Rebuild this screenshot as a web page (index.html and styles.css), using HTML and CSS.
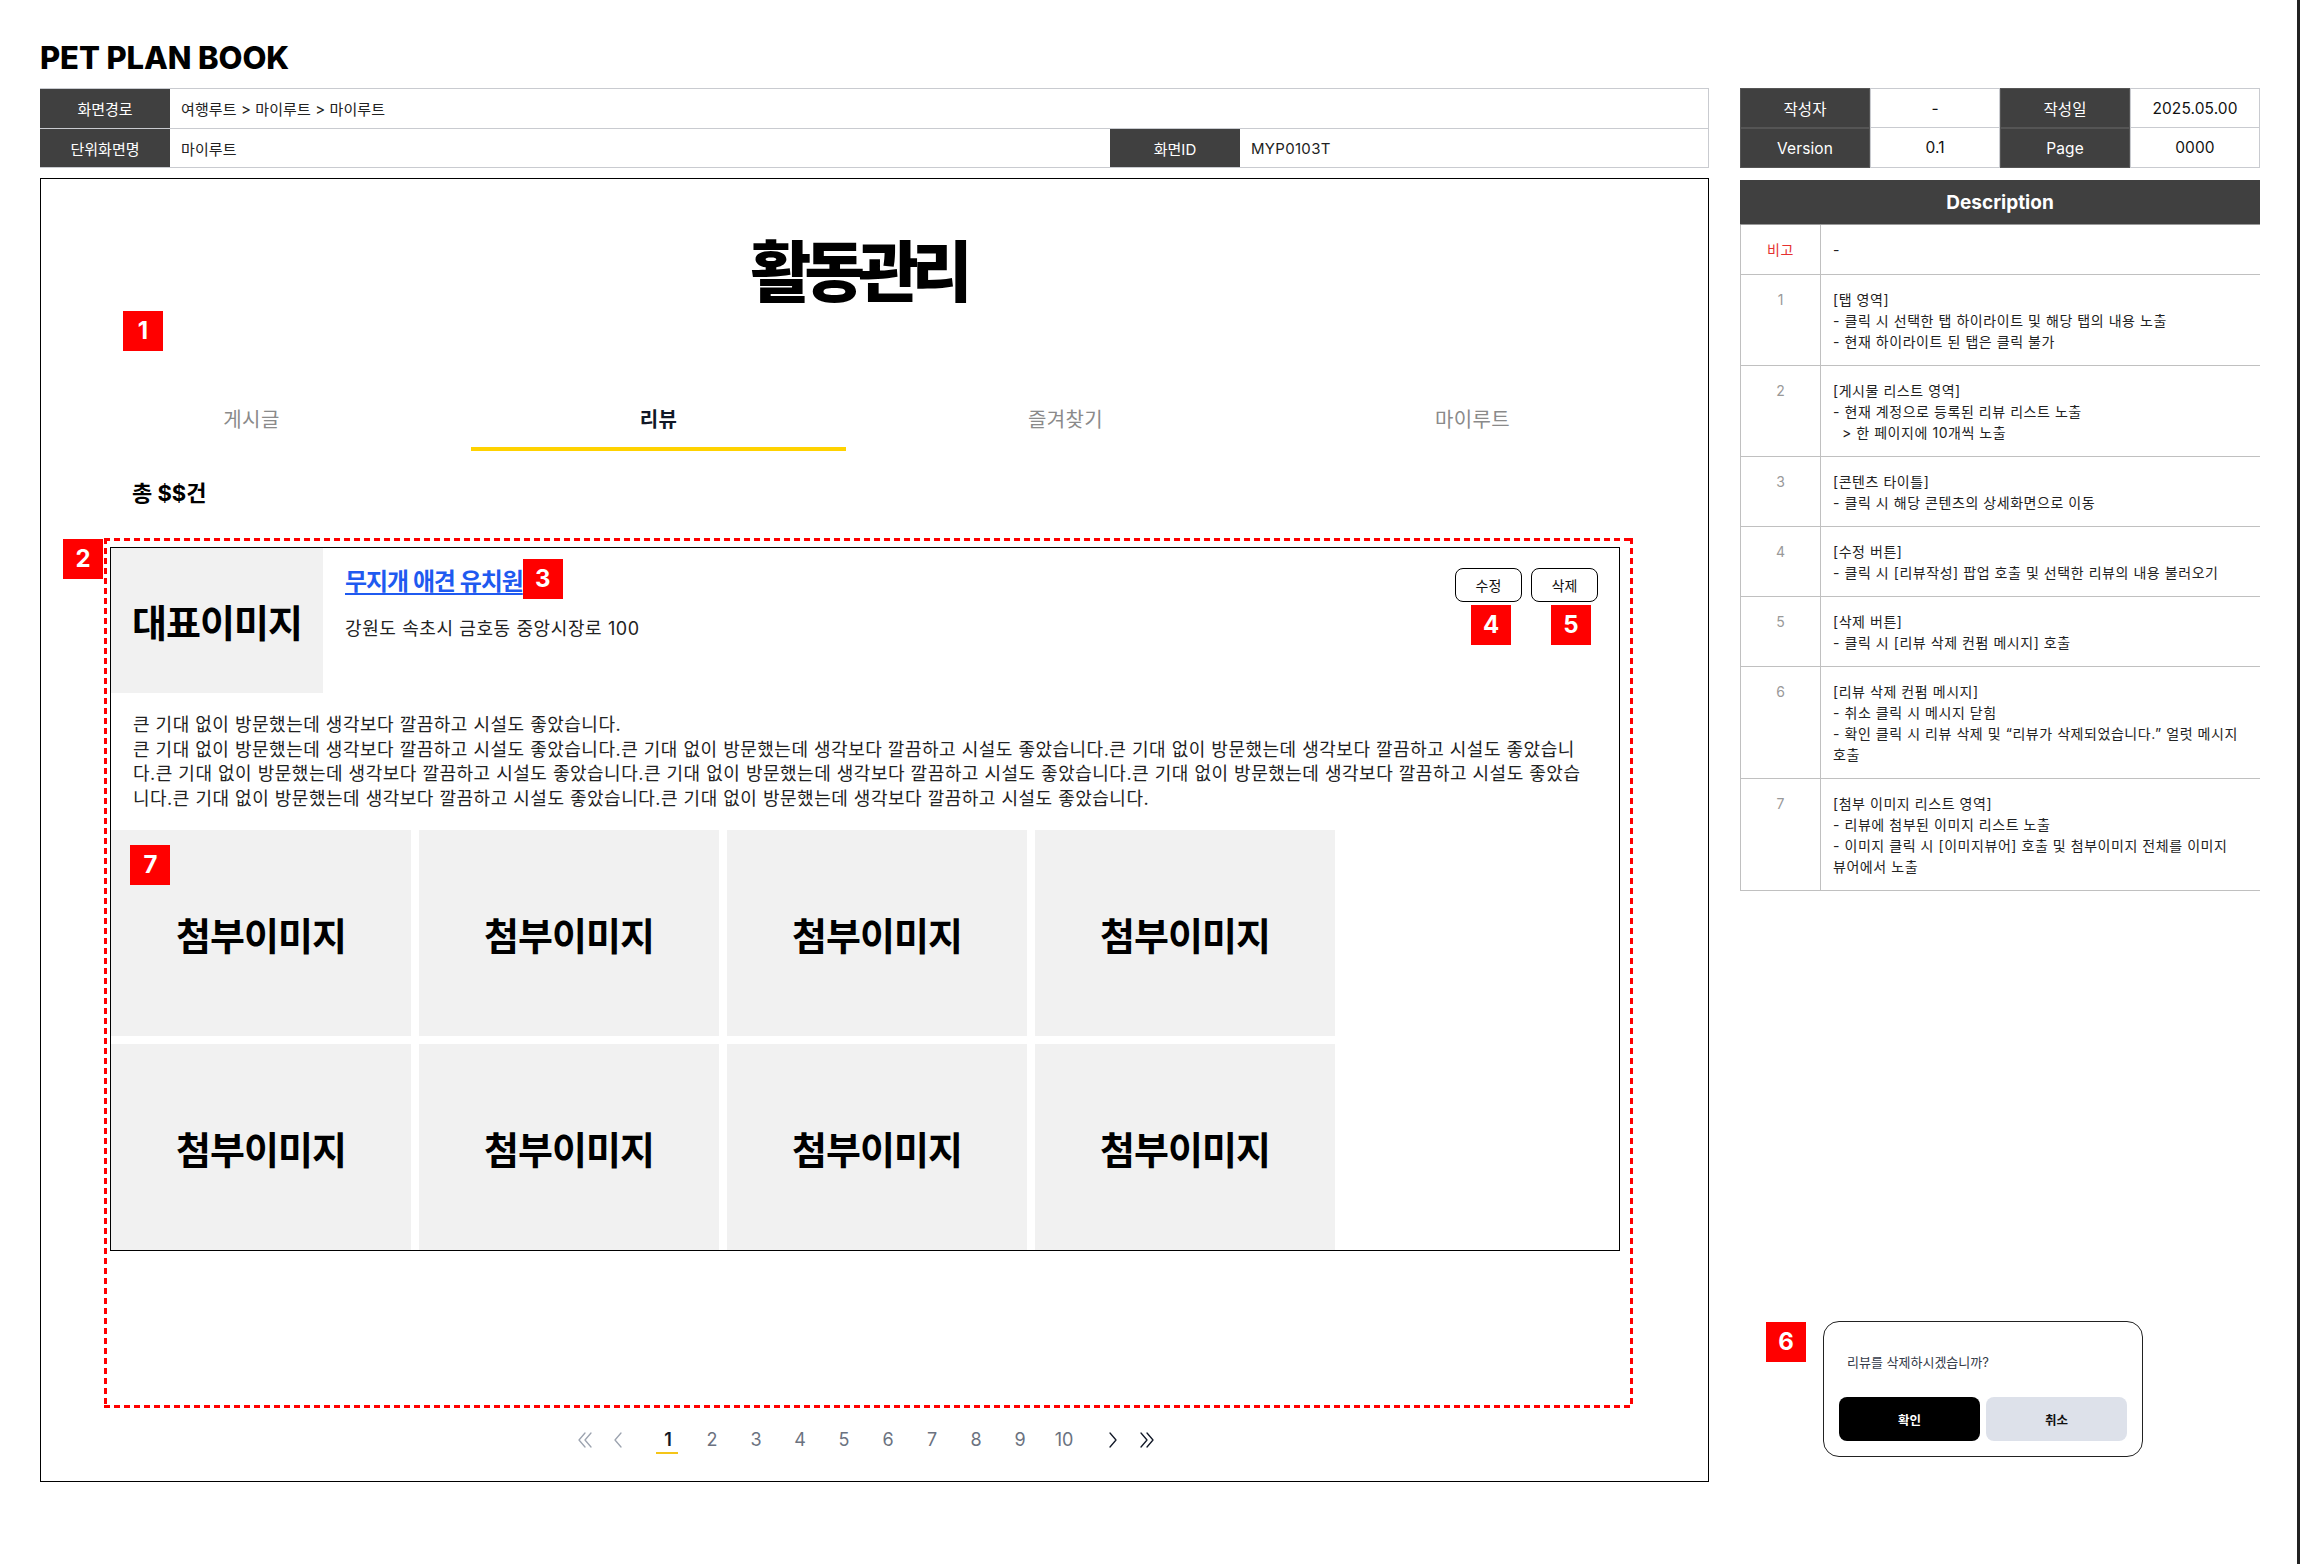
FILE: index.html
```html
<!DOCTYPE html>
<html lang="ko">
<head>
<meta charset="utf-8">
<title>PET PLAN BOOK - 활동관리</title>
<link rel="stylesheet" href="styles.css">
</head>
<body>
<div class="page">
  <div class="main-col">
    <h1 class="brand">PET PLAN BOOK</h1>
    <div class="meta">
      <div class="meta-row">
        <div class="meta-label">화면경로</div>
        <div class="meta-value">여행루트 &gt; 마이루트 &gt; 마이루트</div>
      </div>
      <div class="meta-row">
        <div class="meta-label">단위화면명</div>
        <div class="meta-value grow">마이루트</div>
        <div class="meta-label">화면ID</div>
        <div class="meta-value id">MYP0103T</div>
      </div>
    </div>

    <div class="frame">
      <h2 class="screen-title">활동관리</h2>
      <div class="badge badge-1">1</div>
      <nav class="tabs">
        <span class="tab">게시글</span>
        <span class="tab active">리뷰</span>
        <span class="tab">즐겨찾기</span>
        <span class="tab">마이루트</span>
      </nav>
      <p class="count">총 $$건</p>

      <section class="review-area">
        <span class="badge badge-2">2</span>
        <article class="card">
          <div class="card-head">
            <div class="thumb">대표이미지</div>
            <div class="info">
              <div class="title-row"><a class="place" href="#">무지개 애견 유치원</a><span class="badge">3</span></div>
              <p class="addr">강원도 속초시 금호동 중앙시장로 100</p>
            </div>
            <div class="actions">
              <div class="act"><button class="btn-sm">수정</button><span class="badge badge-4">4</span></div>
              <div class="act"><button class="btn-sm">삭제</button><span class="badge badge-5">5</span></div>
            </div>
          </div>
          <p class="review-text">큰 기대 없이 방문했는데 생각보다 깔끔하고 시설도 좋았습니다.<br>큰 기대 없이 방문했는데 생각보다 깔끔하고 시설도 좋았습니다.큰 기대 없이 방문했는데 생각보다 깔끔하고 시설도 좋았습니다.큰 기대 없이 방문했는데 생각보다 깔끔하고 시설도 좋았습니다.큰 기대 없이 방문했는데 생각보다 깔끔하고 시설도 좋았습니다.큰 기대 없이 방문했는데 생각보다 깔끔하고 시설도 좋았습니다.큰 기대 없이 방문했는데 생각보다 깔끔하고 시설도 좋았습니다.큰 기대 없이 방문했는데 생각보다 깔끔하고 시설도 좋았습니다.큰 기대 없이 방문했는데 생각보다 깔끔하고 시설도 좋았습니다.</p>
          <div class="gallery">
            <div class="shot">첨부이미지<span class="badge badge-7">7</span></div>
            <div class="shot">첨부이미지</div>
            <div class="shot">첨부이미지</div>
            <div class="shot">첨부이미지</div>
            <div class="shot">첨부이미지</div>
            <div class="shot">첨부이미지</div>
            <div class="shot">첨부이미지</div>
            <div class="shot">첨부이미지</div>
          </div>
        </article>
      </section>

      <div class="pager">
        <span class="pg-arrow first"><svg width="20" height="16" viewBox="0 0 20 16"><polyline points="9,1 3,8 9,15"/><polyline points="15,1 9,8 15,15"/></svg></span>
        <span class="pg-arrow prev"><svg width="12" height="16" viewBox="0 0 12 16"><polyline points="9,1 3,8 9,15"/></svg></span>
        <span class="pg-num on">1</span>
        <span class="pg-num">2</span>
        <span class="pg-num">3</span>
        <span class="pg-num">4</span>
        <span class="pg-num">5</span>
        <span class="pg-num">6</span>
        <span class="pg-num">7</span>
        <span class="pg-num">8</span>
        <span class="pg-num">9</span>
        <span class="pg-num">10</span>
        <span class="pg-arrow next"><svg width="12" height="16" viewBox="0 0 12 16"><polyline points="3,1 9,8 3,15"/></svg></span>
        <span class="pg-arrow last"><svg width="20" height="16" viewBox="0 0 20 16"><polyline points="5,1 11,8 5,15"/><polyline points="11,1 17,8 11,15"/></svg></span>
      </div>
    </div>
  </div>

  <aside class="side">
    <div class="info-grid">
      <div class="ik">작성자</div>
      <div class="iv">-</div>
      <div class="ik">작성일</div>
      <div class="iv">2025.05.00</div>
      <div class="ik">Version</div>
      <div class="iv r2">0.1</div>
      <div class="ik">Page</div>
      <div class="iv r2">0000</div>
    </div>

    <div class="desc-head">Description</div>
    <div class="desc-row first">
      <div class="desc-no note">비고</div>
      <div class="desc-text">-</div>
    </div>
    <div class="desc-row">
      <div class="desc-no">1</div>
      <div class="desc-text">[탭 영역]<br>- 클릭 시 선택한 탭 하이라이트 및 해당 탭의 내용 노출<br>- 현재 하이라이트 된 탭은 클릭 불가</div>
    </div>
    <div class="desc-row">
      <div class="desc-no">2</div>
      <div class="desc-text">[게시물 리스트 영역]<br>- 현재 계정으로 등록된 리뷰 리스트 노출<br>&nbsp;&nbsp;&gt; 한 페이지에 10개씩 노출</div>
    </div>
    <div class="desc-row">
      <div class="desc-no">3</div>
      <div class="desc-text">[콘텐츠 타이틀]<br>- 클릭 시 해당 콘텐츠의 상세화면으로 이동</div>
    </div>
    <div class="desc-row">
      <div class="desc-no">4</div>
      <div class="desc-text">[수정 버튼]<br>- 클릭 시 [리뷰작성] 팝업 호출 및 선택한 리뷰의 내용 불러오기</div>
    </div>
    <div class="desc-row">
      <div class="desc-no">5</div>
      <div class="desc-text">[삭제 버튼]<br>- 클릭 시 [리뷰 삭제 컨펌 메시지] 호출</div>
    </div>
    <div class="desc-row">
      <div class="desc-no">6</div>
      <div class="desc-text">[리뷰 삭제 컨펌 메시지]<br>- 취소 클릭 시 메시지 닫힘<br>- 확인 클릭 시 리뷰 삭제 및 “리뷰가 삭제되었습니다.” 얼럿 메시지<br>호출</div>
    </div>
    <div class="desc-row">
      <div class="desc-no">7</div>
      <div class="desc-text">[첨부 이미지 리스트 영역]<br>- 리뷰에 첨부된 이미지 리스트 노출<br>- 이미지 클릭 시 [이미지뷰어] 호출 및 첨부이미지 전체를 이미지<br>뷰어에서 노출</div>
    </div>

    <div class="popup-row">
      <span class="badge badge-6">6</span>
      <div class="popup">
        <p class="popup-msg">리뷰를 삭제하시겠습니까?</p>
        <div class="popup-btns">
          <button class="pbtn ok">확인</button>
          <button class="pbtn cancel">취소</button>
        </div>
      </div>
    </div>
  </aside>
</div>
<div class="edge"></div>
</body>
</html>
```

FILE: styles.css
```css
* {
  box-sizing: border-box;
  margin: 0;
  padding: 0;
}

body {
  margin: 0;
  width: 2300px;
  height: 1564px;
  overflow: hidden;
  position: relative;
  background: #fff;
  color: #111;
  font-family: Inter, "Noto Sans CJK KR", sans-serif;
}

.page {
  display: flex;
  gap: 31px;
  padding: 39px 0 0 40px;
}

.main-col {
  width: 1669px;
}

.brand {
  font-size: 31px;
  font-weight: 800;
  line-height: 38px;
  height: 38px;
  letter-spacing: -0.1px;
  color: #000;
}

/* meta table */
.meta {
  margin-top: 11px;
  border-top: 1px solid #c9cbd0;
  border-right: 1px solid #c9cbd0;
  border-bottom: 1px solid #c9cbd0;
}

.meta-row {
  display: flex;
  height: 39px;
}

.meta-row + .meta-row {
  border-top: 1px solid #c9cbd0;
}

.meta-label {
  width: 130px;
  flex: none;
  background: #404040;
  color: #fff;
  font-size: 15px;
  display: flex;
  align-items: center;
  justify-content: center;
}

.meta-value {
  display: flex;
  align-items: center;
  padding-left: 11px;
  font-size: 15px;
  letter-spacing: 0.1px;
  color: #222;
}

.meta-value.grow {
  width: 940px;
}

.meta-value.id {
  flex: 1;
  letter-spacing: 0.3px;
}

/* main frame */
.frame {
  margin-top: 10px;
  border: 1px solid #000;
  padding: 60px 44px 26px 27px;
}

.screen-title {
  font-size: 66px;
  line-height: 66px;
  font-weight: 900;
  letter-spacing: -7px;
  text-align: center;
  padding-right: 16px;
  color: #000;
}

.badge {
  width: 40px;
  height: 40px;
  flex: none;
  display: inline-flex;
  align-items: center;
  justify-content: center;
  background: #ff0000;
  color: #fff;
  font-family: Inter, sans-serif;
  font-weight: 700;
  font-size: 24px;
  line-height: 1;
}

.badge-1 {
  display: flex;
  margin: 6px 0 57px 55px;
}

.tabs {
  display: grid;
  grid-template-columns: repeat(4, 375px);
  column-gap: 32px;
  margin-left: -4px;
}

.tab {
  text-align: center;
  font-size: 20px;
  line-height: 24px;
  letter-spacing: 0.4px;
  padding-bottom: 15px;
  border-bottom: 4px solid transparent;
  color: #8a8a8a;
}

.tab.active {
  color: #111827;
  font-weight: 700;
  border-bottom-color: #ffd200;
}

.count {
  margin-top: 27px;
  padding-left: 64px;
  font-size: 22px;
  font-weight: 700;
  line-height: 30px;
  color: #000;
}

/* annotated list area */
.review-area {
  position: relative;
  margin-top: 30px;
  margin-left: 36px;
  width: 1529px;
  height: 870px;
  padding: 9px 13px 0 6px;
  background:
    repeating-linear-gradient(90deg, #f00 0 6px, transparent 6px 10px) left top / 100% 3px no-repeat,
    repeating-linear-gradient(90deg, #f00 0 6px, transparent 6px 10px) left bottom / 100% 3px no-repeat,
    repeating-linear-gradient(180deg, #f00 0 6px, transparent 6px 10px) left top / 3px 100% no-repeat,
    repeating-linear-gradient(180deg, #f00 0 6px, transparent 6px 10px) right top / 3px 100% no-repeat;
}

.badge-2 {
  position: absolute;
  left: -41px;
  top: 1px;
}

.card {
  border: 1px solid #000;
}

.card-head {
  display: flex;
  height: 145px;
}

.thumb {
  width: 212px;
  height: 145px;
  flex: none;
  background: #f1f1f1;
  display: flex;
  align-items: center;
  justify-content: center;
  font-size: 38px;
  font-weight: 700;
  letter-spacing: -1px;
  color: #000;
}

.info {
  flex: 1;
  padding: 11px 0 0 22px;
}

.title-row {
  display: flex;
  align-items: center;
  height: 40px;
}

.place {
  font-size: 24px;
  font-weight: 600;
  letter-spacing: -1.1px;
  color: #1f5af0;
  text-decoration: underline;
  text-decoration-thickness: 2px;
  text-underline-offset: 3px;
}

.addr {
  margin-top: 18px;
  font-size: 18px;
  line-height: 24px;
  letter-spacing: 0.6px;
  color: #222;
}

.actions {
  display: flex;
  align-items: flex-start;
  gap: 9px;
  padding: 20px 21px 0 0;
}

.act {
  position: relative;
}

.btn-sm {
  width: 67px;
  height: 34px;
  border: 1px solid #000;
  border-radius: 8px;
  background: #fff;
  font-family: Inter, "Noto Sans CJK KR", sans-serif;
  font-size: 14px;
  color: #111;
}

.badge-4 {
  position: absolute;
  top: 37px;
  left: 16px;
}

.badge-5 {
  position: absolute;
  top: 37px;
  left: 20px;
}

.review-text {
  margin-top: 20px;
  padding: 0 34px 0 22px;
  font-size: 18px;
  line-height: 24.5px;
  letter-spacing: 0.5px;
  word-break: break-all;
  color: #222;
}

.gallery {
  margin-top: 19px;
  display: grid;
  grid-template-columns: repeat(4, 300px);
  grid-auto-rows: 206px;
  gap: 8px;
}

.shot {
  position: relative;
  background: #f1f1f1;
  display: flex;
  align-items: center;
  justify-content: center;
  font-size: 38px;
  font-weight: 700;
  letter-spacing: -1px;
  color: #000;
}

.badge-7 {
  position: absolute;
  left: 19px;
  top: 15px;
}

/* pagination */
.pager {
  margin-top: 17px;
  height: 30px;
  display: flex;
  justify-content: center;
  align-items: center;
}

.pg-arrow {
  width: 20px;
  height: 30px;
  display: flex;
  align-items: center;
  justify-content: center;
}

.pg-arrow svg {
  fill: none;
  stroke-width: 1.3;
  stroke-linecap: round;
  stroke-linejoin: round;
}

.pg-arrow.first,
.pg-arrow.prev {
  stroke: #9ca3af;
}

.pg-arrow.next,
.pg-arrow.last {
  stroke: #111827;
}

.pg-arrow.first { margin-right: 12px; }
.pg-arrow.prev { margin-right: 18px; }
.pg-arrow.next { margin-left: 17px; }
.pg-arrow.last { margin-left: 13px; }

.pg-num {
  position: relative;
  width: 44px;
  text-align: center;
  font-size: 18px;
  line-height: 30px;
  color: #6b7280;
}

.pg-num.on {
  color: #111827;
  font-weight: 600;
}

.pg-num.on::after {
  content: "";
  position: absolute;
  left: 10px;
  right: 12px;
  bottom: 1px;
  height: 2px;
  background: #f5c518;
}

/* right side */
.side {
  width: 520px;
  margin-top: 49px;
}

.info-grid {
  display: grid;
  grid-template-columns: repeat(4, 130px);
  grid-auto-rows: 40px;
}

.ik {
  background: #404040;
  border: 1px solid #555;
  color: #fff;
  font-size: 15.5px;
  letter-spacing: 0.1px;
  display: flex;
  align-items: center;
  justify-content: center;
}

.iv {
  border: 1px solid #c9cbd0;
  background: #fff;
  color: #111;
  font-size: 15.5px;
  letter-spacing: 0.1px;
  display: flex;
  align-items: center;
  justify-content: center;
}

.iv.r2 {
  border-top: none;
}

.desc-head {
  margin-top: 12px;
  height: 45px;
  background: #404040;
  border-bottom: 1px solid #9a9a9a;
  color: #fff;
  font-size: 19px;
  font-weight: 700;
  display: flex;
  align-items: center;
  justify-content: center;
}

.desc-row {
  display: grid;
  grid-template-columns: 80px 1fr;
  border-left: 1px solid #c0c0c0;
  border-bottom: 1px solid #c0c0c0;
}

.desc-no {
  border-right: 1px solid #c0c0c0;
  text-align: center;
  padding-top: 14px;
  font-size: 14px;
  line-height: 21px;
  color: #999;
}

.desc-no.note {
  color: #e53030;
  letter-spacing: 0.5px;
}

.desc-text {
  padding: 14px 12px 13px;
  font-size: 14px;
  line-height: 21px;
  letter-spacing: 0.55px;
  color: #222;
}

.desc-row.first .desc-text {
  padding-bottom: 14px;
}

.popup-row {
  margin-top: 430px;
  display: flex;
  align-items: flex-start;
  gap: 17px;
  padding-left: 26px;
}

.badge-6 {
  margin-top: 1px;
}

.popup {
  width: 320px;
  height: 136px;
  border: 1px solid #222;
  border-radius: 16px;
  padding: 31px 15px 0;
}

.popup-msg {
  padding-left: 8px;
  font-size: 13px;
  line-height: 18px;
  color: #333a48;
}

.popup-btns {
  margin-top: 26px;
  display: flex;
  gap: 6px;
}

.pbtn {
  width: 141px;
  height: 44px;
  border: none;
  border-radius: 8px;
  font-family: Inter, "Noto Sans CJK KR", sans-serif;
  font-size: 12.5px;
  font-weight: 700;
}

.pbtn.ok {
  background: #000;
  color: #fff;
}

.pbtn.cancel {
  background: #dde1ea;
  color: #111;
}

.edge {
  position: absolute;
  top: 0;
  right: 0;
  width: 3px;
  height: 1564px;
  background: #222;
}
```
